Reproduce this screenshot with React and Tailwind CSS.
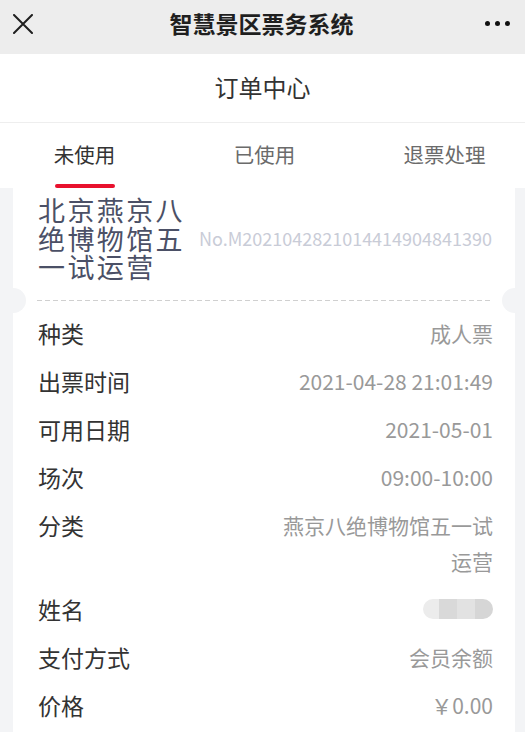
import React, { useState } from "react";

const rows = [
  { label: "种类", value: "成人票" },
  { label: "出票时间", value: "2021-04-28 21:01:49" },
  { label: "可用日期", value: "2021-05-01" },
  { label: "场次", value: "09:00-10:00" },
  { label: "分类", value: "燕京八绝博物馆五一试运营" },
  { label: "姓名", value: null },
  { label: "支付方式", value: "会员余额" },
  { label: "价格", value: "￥0.00" },
];

const tabs = ["未使用", "已使用", "退票处理"];

// blurred name placeholder
const NameMask = () => (
  <div className="flex h-[20px] w-[70px] overflow-hidden rounded-full mt-[8px]">
    <div className="w-[16px] bg-[#ececec]" />
    <div className="w-[18px] bg-[#d9d9d9]" />
    <div className="w-[18px] bg-[#e2e2e2]" />
    <div className="w-[18px] bg-[#d6d6d6]" />
  </div>
);

const App = () => {
  const [active, setActive] = useState(0);

  return (
    <div className="min-h-screen bg-[#f3f4f6] font-['Noto_Sans_CJK_SC','Noto_Sans',sans-serif]">
      {/* top bar */}
      <div className="flex h-[54px] items-center bg-[#ededed] pb-[7px] pl-[13px] pr-[15px]">
        <div className="w-[60px]">
          <svg width="20" height="20" viewBox="0 0 20 20" className="text-[#1f1f1f]">
            <path d="M1 1 L19 19 M19 1 L1 19" stroke="currentColor" strokeWidth="2" strokeLinecap="round" />
          </svg>
        </div>
        <div className="flex-1 text-center text-[23px] font-bold text-[#1f1f1f]">智慧景区票务系统</div>
        <div className="flex w-[60px] justify-end gap-[5px]">
          <span className="h-[5px] w-[5px] rounded-full bg-[#111]" />
          <span className="h-[5px] w-[5px] rounded-full bg-[#111]" />
          <span className="h-[5px] w-[5px] rounded-full bg-[#111]" />
        </div>
      </div>

      <div className="flex h-[69px] items-center justify-center border-b border-[#eeeeee] bg-white pb-[3px] text-[24px] text-[#333]">
        订单中心
      </div>

      {/* tabs */}
      <div className="flex h-[65px] justify-center overflow-hidden bg-white pl-[4px]">
        {tabs.map((t, i) => (
          <div key={t} onClick={() => setActive(i)} className="flex w-[180px] shrink-0 flex-col items-center pt-[19px]">
            <div className={`text-[20.5px] leading-[24px] ${active === i ? "text-[#333]" : "text-[#6b6b6b]"}`}>{t}</div>
            {active === i && <div className="mt-[18px] h-[4px] w-[60px] rounded-[2px] bg-[#e8112d]" />}
          </div>
        ))}
      </div>

      {/* ticket card */}
      <div className="ml-[13px] mr-[10px] bg-white pb-[20px]">
        <div className="flex items-center justify-between pl-[25px] pr-[23px] pt-[8px]">
          <div className="w-[155px] shrink-0 text-[27px] leading-[28.5px] tracking-[2.4px] text-[#4b5066]">北京燕京八绝博物馆五一试运营</div>
          <div className="whitespace-nowrap text-[18px] text-[#c9ccd7]">No.M2021042821014414904841390</div>
        </div>

        <div className="relative mt-[18px] h-px">
          <div className="ml-[24px] mr-[23px] h-px bg-[repeating-linear-gradient(90deg,#d0d0d0_0_5px,transparent_5px_8px)]" />
          <div className="absolute left-[-12px] top-[-12px] h-[25px] w-[25px] rounded-full bg-[#f3f4f6]" />
          <div className="absolute right-[-12px] top-[-12px] h-[25px] w-[25px] rounded-full bg-[#f3f4f6]" />
        </div>

        <div className="mt-[8px] pl-[25px] pr-[22px]">
          {rows.map((r) => (
            <div key={r.label} className="flex items-start justify-between py-[6px]">
              <div className="shrink-0 text-[23px] leading-[36px] text-[#333]">{r.label}</div>
              {r.value ? (
                <div className="max-w-[215px] text-right text-[21px] leading-[36px] text-[#999]">{r.value}</div>
              ) : (
                <NameMask />
              )}
            </div>
          ))}
        </div>
      </div>
    </div>
  );
};

export default App;
